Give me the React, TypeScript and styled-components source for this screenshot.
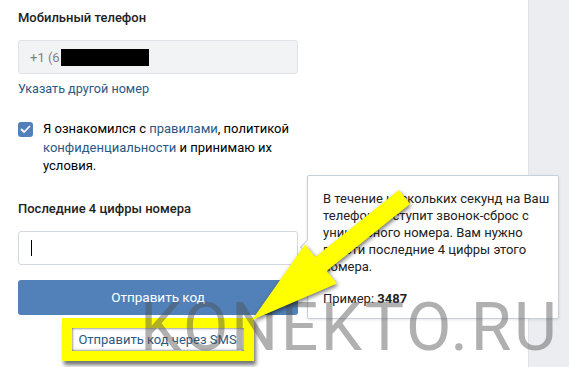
import React from "react";
import styled, { createGlobalStyle } from "styled-components";

const GlobalStyle = createGlobalStyle`
  html, body {
    margin: 0;
    padding: 0;
    background: #ebedf0;
  }
  body {
    font-family: Roboto, "Liberation Sans", Arial, sans-serif;
    font-size: 13px;
    color: #000;
    overflow: hidden;
  }
`;

const App: React.FC = () => {
  return (
    <>
      <GlobalStyle />
      <Page>
        <Main>
          <Form>
            <Label>Мобильный телефон</Label>
            <PhoneBox>
              <span>+1 (6</span>
              <Redacted />
            </PhoneBox>
            <ChangeLink href="#">Указать другой номер</ChangeLink>

            <Agreement>
              <CheckBox>
                <svg width="11" height="9" viewBox="0 0 11 9">
                  <polyline
                    points="1.5,4.5 4.2,7 9.5,1.5"
                    fill="none"
                    stroke="#fff"
                    strokeWidth="1.8"
                    strokeLinecap="round"
                    strokeLinejoin="round"
                  />
                </svg>
              </CheckBox>
              <AgreementText>
                Я ознакомился с <Link href="#">правилами</Link>, политикой{" "}
                <Link href="#">конфиденциальности</Link> и принимаю их
                условия.
              </AgreementText>
            </Agreement>

            <Label $gap={25}>Последние 4 цифры номера</Label>
            <CodeInput>
              <Caret />
            </CodeInput>
            <SubmitButton>Отправить код</SubmitButton>
            <SmsRow>
              <Highlight>
                <Link href="#">Отправить код через SMS</Link>
              </Highlight>
            </SmsRow>
          </Form>
        </Main>
        <Side />

        <Tooltip>
          <TooltipText>
            В течение нескольких секунд на Ваш
            <br />
            телефон поступит звонок-сброс с
            <br />
            уникального номера. Вам нужно
            <br />
            ввести последние 4 цифры этого
            <br />
            номера.
          </TooltipText>
          <TooltipText>
            Пример: <b>3487</b>
          </TooltipText>
        </Tooltip>

        <Watermark>KONEKTO.RU</Watermark>

        <ArrowLayer width="569" height="367" viewBox="0 0 569 367">
          <polygon
            points="252,320 305,244.5 315.4,257 399,190 410,204 326.6,271 337,283.5"
            fill="#ffff00"
            strokeLinejoin="round"
          />
        </ArrowLayer>
      </Page>
    </>
  );
};

export default App;

// Styled Components

const Page = styled.div`
  position: relative;
  display: flex;
  width: 569px;
  height: 367px;
  overflow: hidden;
`;

const Main = styled.div`
  width: 528px;
  background: #fff;
  border-right: 1px solid #dfe2e8;
`;

const Side = styled.div`
  flex: 1;
  background: #ebedf0;
`;

const Form = styled.div`
  width: 280px;
  padding: 10px 0 0 18px;
  display: flex;
  flex-direction: column;
`;

const Label = styled.div<{ $gap?: number }>`
  margin-top: ${(p) => p.$gap ?? 0}px;
  font-weight: 500;
  font-size: 13px;
  line-height: 16px;
  color: #222;
`;

const PhoneBox = styled.div`
  box-sizing: border-box;
  height: 34px;
  margin-top: 14px;
  padding: 0 11px;
  display: flex;
  align-items: center;
  background: #f2f3f5;
  border: 1px solid #dfe2e7;
  border-radius: 3px;
  color: #828282;
  font-size: 13px;
`;

const Redacted = styled.div`
  width: 88px;
  height: 17px;
  margin-left: 1px;
  background: #000;
`;

const Link = styled.a`
  color: #2a5885;
  text-decoration: none;
`;

const ChangeLink = styled(Link)`
  margin-top: 7px;
  font-size: 12.6px;
  line-height: 16px;
`;

const Agreement = styled.div`
  display: flex;
  align-items: flex-start;
  gap: 10px;
  margin-top: 23px;
`;

const CheckBox = styled.div`
  flex: none;
  width: 15px;
  height: 15px;
  margin-top: 2px;
  border-radius: 3px;
  background: #5181b8;
  display: flex;
  align-items: center;
  justify-content: center;
`;

const AgreementText = styled.div`
  line-height: 18.5px;
  color: #000;
  width: 250px;
`;

const CodeInput = styled.div`
  box-sizing: border-box;
  height: 34px;
  margin-top: 14px;
  padding-left: 12px;
  display: flex;
  align-items: center;
  background: #fff;
  border: 1px solid #d3d9de;
  border-radius: 3px;
`;

const Caret = styled.div`
  width: 1px;
  height: 16px;
  background: #000;
`;

const SubmitButton = styled.button`
  box-sizing: border-box;
  height: 35px;
  margin-top: 15px;
  border: none;
  border-radius: 3px;
  background: #5181b8;
  color: #fff;
  font-family: Roboto, "Liberation Sans", Arial, sans-serif;
  font-size: 13.5px;
`;

const SmsRow = styled.div`
  display: flex;
  justify-content: center;
  margin-top: 3px;
`;

const Highlight = styled.div`
  border: 10px solid #ffff00;
  padding: 4px 7px 3px 6px;
  line-height: 16px;
  background: #fff;
  box-shadow: 2px 4px 4px rgba(0, 0, 0, 0.55),
    inset 0 0 3px rgba(0, 0, 0, 0.75);
`;

const Tooltip = styled.div`
  position: absolute;
  left: 307px;
  top: 175px;
  box-sizing: border-box;
  width: 252px;
  height: 144px;
  padding: 14px 6px 0 15px;
  background: #fff;
  border: 1px solid #c5d0db;
  border-radius: 2px;
  box-shadow: 0 1px 3px rgba(0, 0, 0, 0.1);

  &::before {
    content: "";
    position: absolute;
    left: -6px;
    top: 66px;
    width: 9px;
    height: 9px;
    background: #fff;
    border-left: 1px solid #c5d0db;
    border-bottom: 1px solid #c5d0db;
    transform: rotate(45deg);
  }
`;

const TooltipText = styled.p`
  margin: 0 0 15px;
  font-size: 13px;
  line-height: 17px;
  color: #222;
  white-space: nowrap;

  b {
    font-weight: 700;
  }
`;

const Watermark = styled.div`
  position: absolute;
  left: 140px;
  top: 290px;
  font-family: Roboto, "Liberation Sans", Arial, sans-serif;
  font-weight: 400;
  font-size: 66px;
  letter-spacing: 2.6px;
  line-height: 76px;
  color: rgba(80, 80, 80, 0.45);
  pointer-events: none;
  white-space: nowrap;
`;

const ArrowLayer = styled.svg`
  position: absolute;
  left: 0;
  top: 0;
  pointer-events: none;
  filter: drop-shadow(1px 2px 2px rgba(0, 0, 0, 0.55));
`;
